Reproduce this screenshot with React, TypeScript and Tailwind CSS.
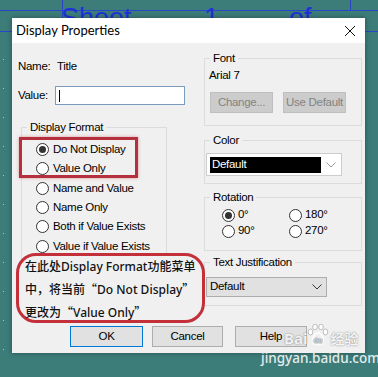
import React from "react";

const ui = "font-['Liberation_Sans',Arial,sans-serif] text-[11.5px] tracking-[-0.3px] text-black whitespace-nowrap";

function Radio({ checked }: { checked?: boolean }) {
  return (
    <span className="w-[13px] h-[13px] rounded-full border border-[#333] bg-white flex items-center justify-center shrink-0">
      {checked && <span className="w-[7px] h-[7px] rounded-full bg-[#333]" />}
    </span>
  );
}

function Chevron({ color }: { color: string }) {
  return (
    <svg width="10" height="6" viewBox="0 0 10 6" fill="none">
      <polyline points="0.5,0.5 5,5 9.5,0.5" stroke={color} strokeWidth="1" />
    </svg>
  );
}

function Group({ label, className, children }: { label: string; className: string; children?: React.ReactNode }) {
  return (
    <fieldset className={`border border-[#dcdcdc] ${className}`}>
      <legend className="ml-[5px] px-[3px] leading-[14px]">{label}</legend>
      {children}
    </fieldset>
  );
}

function Paw() {
  return (
    <svg width="22" height="22" viewBox="0 0 22 22" fill="rgba(255,255,255,0.9)" stroke="rgba(90,90,90,0.45)" strokeWidth="0.8">
      <ellipse cx="3.5" cy="8" rx="2.3" ry="3" />
      <ellipse cx="8" cy="3" rx="2.3" ry="2.8" />
      <ellipse cx="14" cy="3" rx="2.3" ry="2.8" />
      <ellipse cx="18.5" cy="8" rx="2.3" ry="3" />
      <path d="M11 9 C7.5 9 5 14 5.5 18 C6 21.5 16 21.5 16.5 18 C17 14 14.5 9 11 9 Z" fill="none" stroke="rgba(255,255,255,0.9)" strokeWidth="1.6" />
      <text x="11" y="19" textAnchor="middle" fontSize="7" fontWeight="700" fill="rgba(255,255,255,0.95)" stroke="rgba(90,90,90,0.4)" strokeWidth="0.3" fontFamily="Noto Sans, sans-serif">du</text>
    </svg>
  );
}

export default function App() {
  const formats = ["Do Not Display", "Value Only", "Name and Value", "Name Only", "Both if Value Exists", "Value if Value Exists"];

  return (
    <div className="relative w-[378px] h-[377px] overflow-hidden bg-[#3c7c79] pt-[18px] pl-[12px]">
      {/* sheet behind the dialog */}
      <div className="absolute inset-0 pointer-events-none">
        <div className="absolute top-[10px] left-0 right-0 h-px bg-[#2b45c8]" />
        <div className="absolute top-[31px] left-0 right-0 h-px bg-[#2b45c8]" />
        <div className="absolute left-[62px] top-0 h-[32px] w-px bg-[#2b45c8]" />
        <div className="absolute left-[350px] top-0 h-[10px] w-px bg-[#2b45c8]" />
        <div className="absolute left-0 top-0 w-full h-[18px] overflow-hidden font-['Liberation_Sans',Arial,sans-serif] text-[27px] leading-none text-[#2030d8]">
          <span className="absolute left-[61px] top-[5px]">Sheet</span>
          <span className="absolute left-[204px] top-[5px]">1</span>
          <span className="absolute left-[289px] top-[5px]">of</span>
        </div>
        <div className="absolute left-[3px] top-[59px] flex flex-col gap-[28px]">
          {Array.from({ length: 11 }).map((_, i) => (
            <span key={i} className="w-px h-px bg-[#a9c9c6]" />
          ))}
        </div>
      </div>

      {/* Dialog */}
      <div className={`relative w-[353px] h-[335px] bg-[#f0f0f0] flex flex-col shadow-[0_0_5px_rgba(0,0,0,0.35)] ${ui}`}>
        {/* Title bar */}
        <div className="h-[25px] bg-white flex items-center justify-between pl-[4px] pr-[10px] shrink-0">
          <span className="font-['Lato',sans-serif] text-[13px] tracking-normal text-black">Display Properties</span>
          <svg width="10" height="10" viewBox="0 0 10 10">
            <path d="M0 0 L10 10 M10 0 L0 10" stroke="#111" strokeWidth="1" />
          </svg>
        </div>

        {/* Body */}
        <div className="flex">
          {/* Left column */}
          <div className="w-[192px] flex flex-col">
            <div className="mt-[17px] pl-[6px] flex items-center h-[14px]">
              <span className="w-[39px]">Name:</span>
              <span>Title</span>
            </div>
            <div className="mt-[12px] pl-[6px] flex items-center h-[19px]">
              <span className="w-[37px]">Value:</span>
              <div className="w-[130px] h-[19px] bg-white border border-[#7a9cc0] flex items-center pl-[3px]">
                <span className="w-px h-[12px] bg-black" />
              </div>
            </div>
            <Group label="Display Format" className="mt-[15px] ml-[9px] w-[146px] h-[139px]">
              <div className="pt-[6px] pl-[14px] flex flex-col">
                {formats.map((f, i) => (
                  <div key={f} className="h-[19.3px] flex items-center gap-[4px]">
                    <Radio checked={i === 0} />
                    <span>{f}</span>
                  </div>
                ))}
              </div>
            </Group>
          </div>

          {/* Right column */}
          <div className="w-[158px] flex flex-col">
            <Group label="Font" className="mt-[8px] h-[75px]">
              <div className="mt-[3px] pl-[4px] h-[14px] leading-[14px]">Arial 7</div>
              <div className="mt-[10px] pl-[5px] flex gap-[10px]">
                <div className="w-[63px] h-[21px] bg-[#cccccc] border border-[#bfbfbf] text-[#838383] flex items-center justify-center">Change...</div>
                <div className="w-[63px] h-[21px] bg-[#cccccc] border border-[#bfbfbf] text-[#838383] flex items-center justify-center">Use Default</div>
              </div>
            </Group>
            <Group label="Color" className="mt-[7px] h-[51px]">
              <div className="mt-[6px] ml-[1px] w-[136px] h-[23px] bg-white border border-[#cdcdcd] flex items-center pl-[3px] pr-[5px] gap-[5px]">
                <div className="flex-1 h-[16px] bg-black text-white flex items-center pl-[2px]">Default</div>
                <Chevron color="#9a9a9a" />
              </div>
            </Group>
            <Group label="Rotation" className="mt-[6px] h-[61px]">
              <div className="pl-[17px] pt-[3px] grid grid-cols-[67px_1fr]">
                {["0°", "180°", "90°", "270°"].map((r, i) => (
                  <div key={r} className="h-[16px] flex items-center gap-[3px]">
                    <Radio checked={i === 0} />
                    <span>{r}</span>
                  </div>
                ))}
              </div>
            </Group>
            <Group label="Text Justification" className="mt-[4px] h-[51px]">
              <div className="mt-[8px] ml-[1px] w-[121px] h-[20px] bg-[#e1e1e1] border border-[#adadad] flex items-center justify-between pl-[3px] pr-[4px]">
                <span>Default</span>
                <Chevron color="#333" />
              </div>
            </Group>
          </div>
        </div>

        {/* Buttons */}
        <div className="mt-[20px] pl-[58px] flex">
          <div className="w-[73px] h-[21px] bg-[#e1e1e1] border border-[#0078d7] flex items-center justify-center">OK</div>
          <div className="ml-[9px] w-[71px] h-[21px] bg-[#e1e1e1] border border-[#adadad] flex items-center justify-center">Cancel</div>
          <div className="ml-[12px] w-[72px] h-[21px] bg-[#e1e1e1] border border-[#adadad] flex items-center justify-center">Help</div>
        </div>

        {/* Annotation marks */}
        <div className="absolute left-[7px] top-[119px] w-[119px] h-[41px] border-[3px] border-[#b3303c] shadow-[0_0_3px_rgba(200,60,70,0.5)]" />
        <div className="absolute left-[4px] top-[235px] w-[189px] h-[70px] rounded-[20px] border-[3px] border-[#c3303a] bg-[#f0f0f0] pl-[6px] font-['Noto_Sans','Noto_Sans_CJK_SC',sans-serif] text-[12px] leading-[22px] text-[#111] font-medium tracking-normal">
          <div>在此处Display Format功能菜单</div>
          <div>中，将当前<span className="font-['Noto_Sans_CJK_SC',sans-serif]">“</span>Do Not Display<span className="font-['Noto_Sans_CJK_SC',sans-serif]">”</span></div>
          <div>更改为<span className="font-['Noto_Sans_CJK_SC',sans-serif]">“</span>Value Only<span className="font-['Noto_Sans_CJK_SC',sans-serif]">”</span></div>
        </div>
      </div>

      {/* watermark */}
      <div className="absolute left-[261px] top-[324px] flex flex-col items-start font-['Noto_Sans','Noto_Sans_CJK_SC',sans-serif]">
        <div className="ml-[23px] flex items-end h-[22px] text-white/90 [text-shadow:0_0_1.5px_rgba(0,0,0,0.55)]">
          <span className="text-[15px] font-bold leading-none">Bai</span>
          <Paw />
          <span className="ml-[1px] text-[14px] font-bold leading-none">经验</span>
        </div>
        <span className="mt-[6px] text-[13.5px] font-medium text-[#e4ecec] leading-none">jingyan.baidu.com</span>
      </div>
    </div>
  );
}
